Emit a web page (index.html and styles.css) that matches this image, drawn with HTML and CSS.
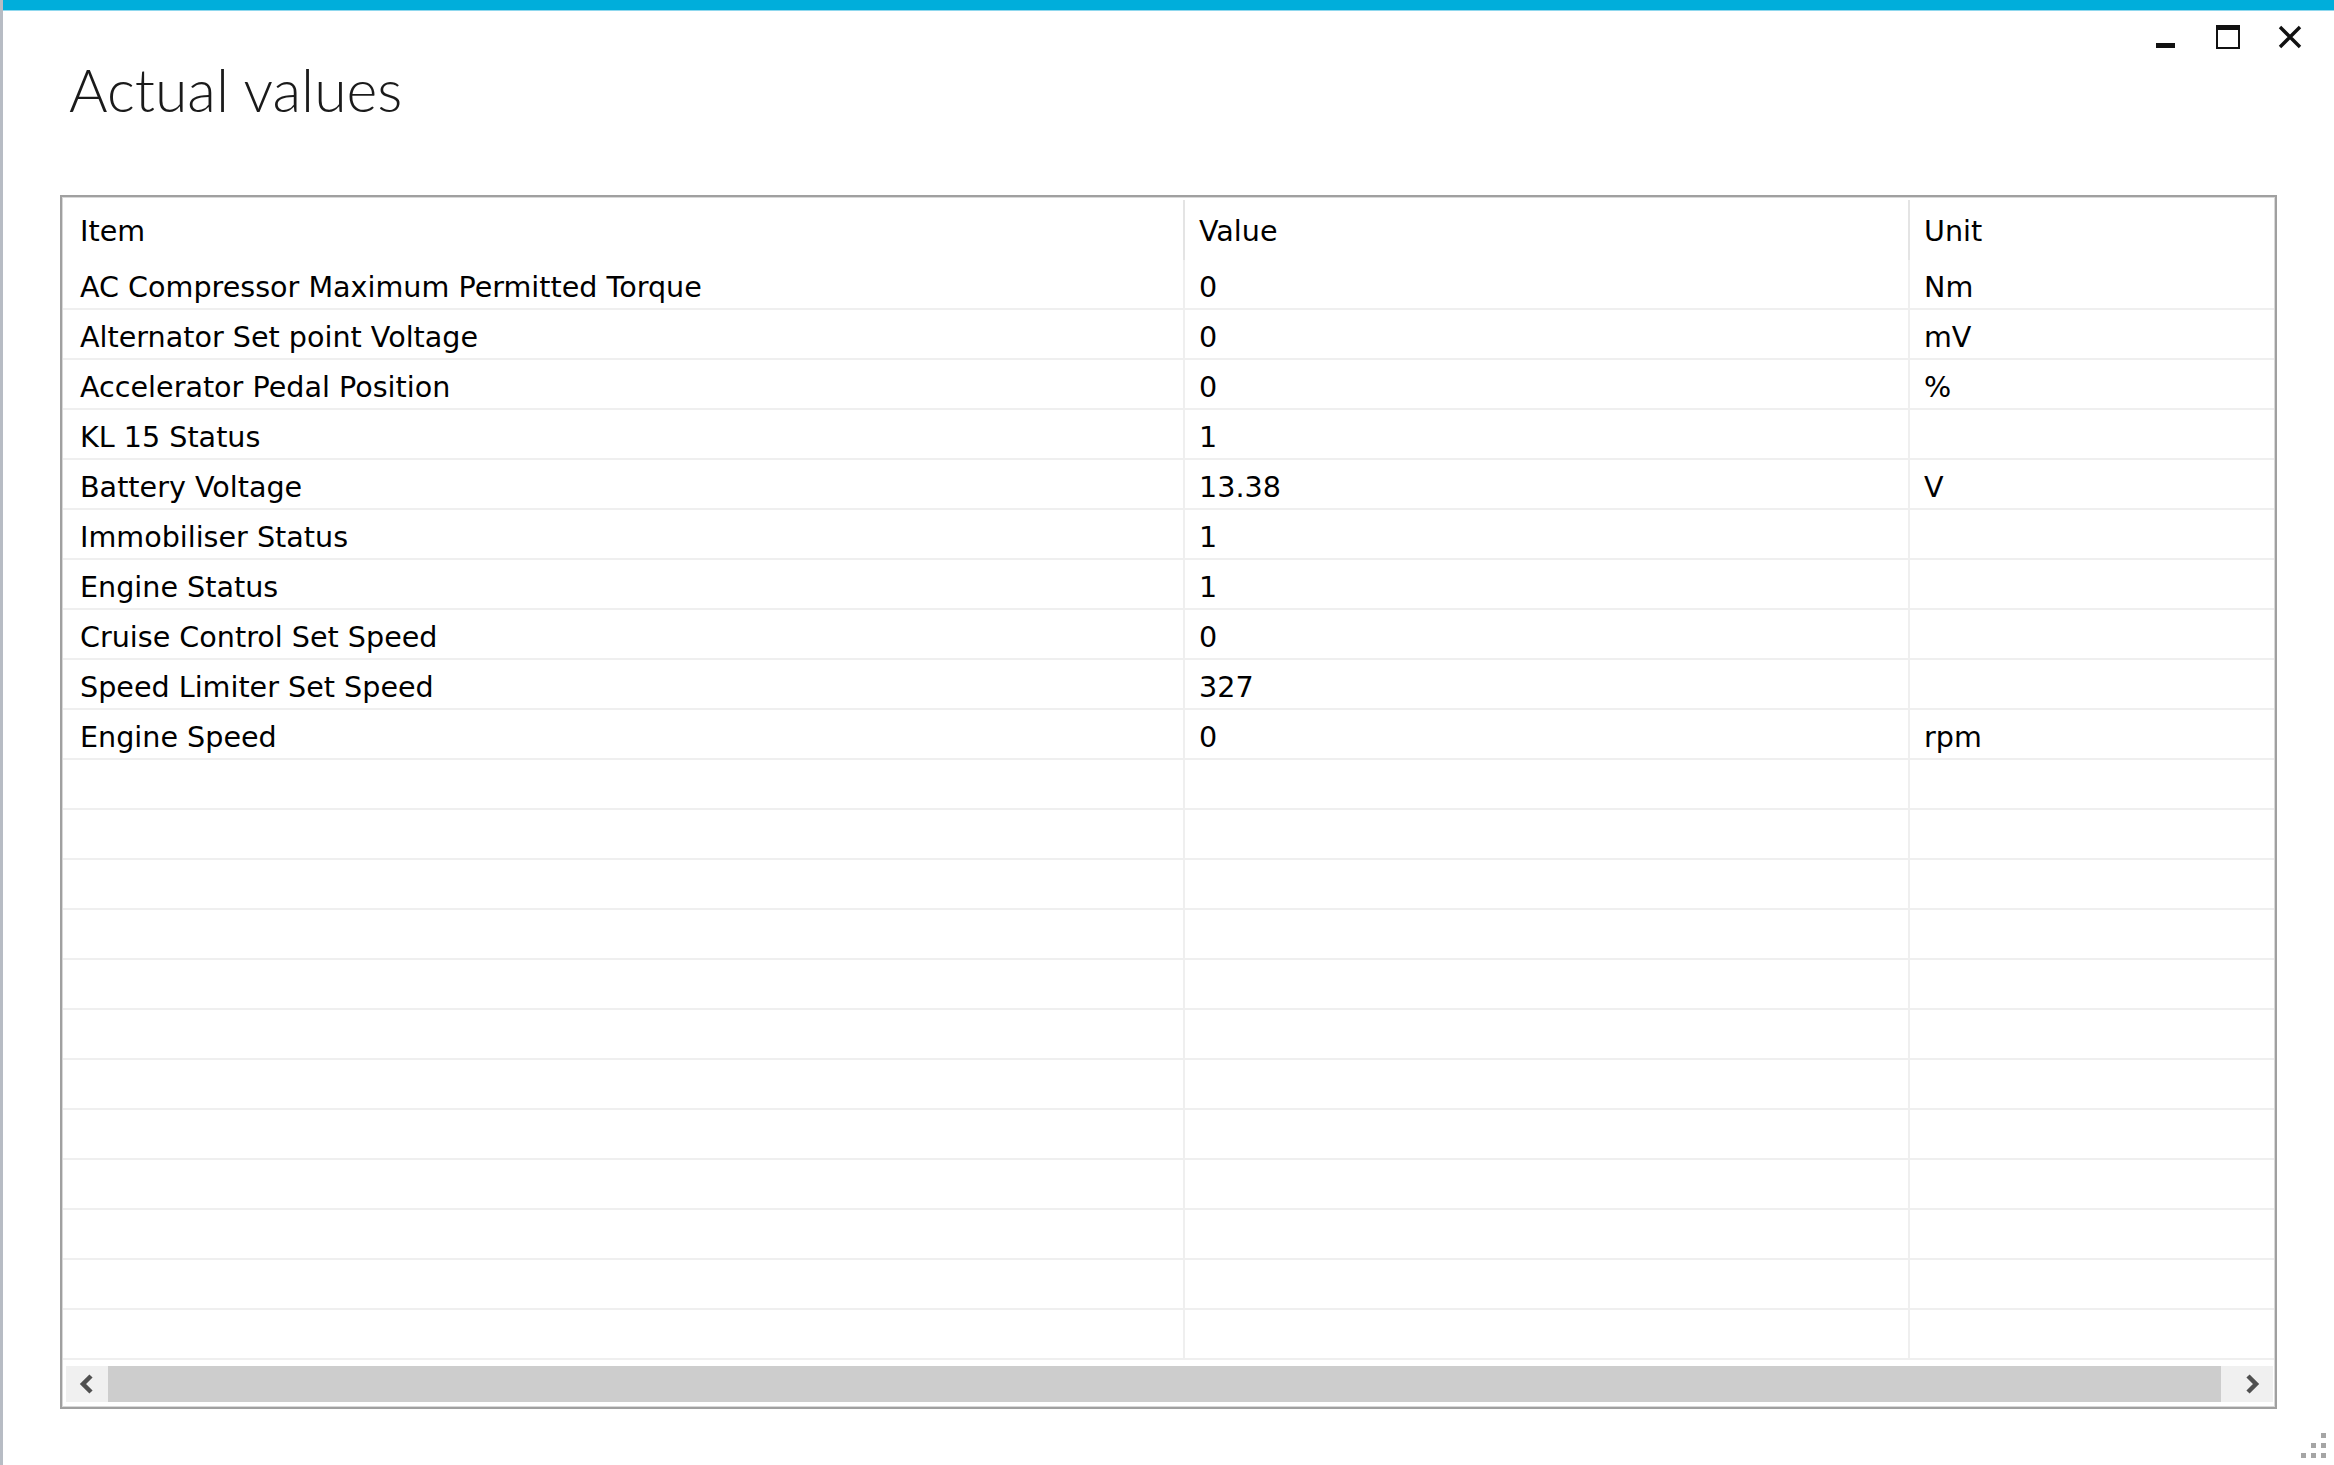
FILE: index.html
```html
<!DOCTYPE html>
<html lang="en">
<head>
    <meta charset="UTF-8">
    <meta name="viewport" content="width=device-width, initial-scale=1.0">
    <title>Actual values</title>
    <link rel="stylesheet" href="styles.css">
</head>
<body>
    <div class="window">
        <div class="accent-bar"></div>

        <div class="window-header">
            <h1 class="window-title">Actual values</h1>
            <div class="window-controls">
                <button class="control-button" title="Minimize">
                    <svg width="24" height="24" viewBox="0 0 24 24"><rect x="2" y="18" width="19" height="5" fill="#111"/></svg>
                </button>
                <button class="control-button" title="Maximize">
                    <svg width="24" height="24" viewBox="0 0 24 24"><rect x="1" y="1" width="22" height="22" fill="none" stroke="#111" stroke-width="2"/><rect x="1" y="1" width="22" height="4" fill="#111"/></svg>
                </button>
                <button class="control-button" title="Close">
                    <svg width="24" height="24" viewBox="0 0 24 24"><path d="M2 2 L22 22 M22 2 L2 22" stroke="#111" stroke-width="3.4" fill="none"/></svg>
                </button>
            </div>
        </div>

        <div class="values-grid">
            <div class="grid-head">
                <div class="cell">Item</div>
                <div class="cell">Value</div>
                <div class="cell">Unit</div>
            </div>
            <div class="grid-body" id="grid-body">
                <div class="grid-row"><div class="cell">AC Compressor Maximum Permitted Torque</div><div class="cell">0</div><div class="cell">Nm</div></div>
                <div class="grid-row"><div class="cell">Alternator Set point Voltage</div><div class="cell">0</div><div class="cell">mV</div></div>
                <div class="grid-row"><div class="cell">Accelerator Pedal Position</div><div class="cell">0</div><div class="cell">%</div></div>
                <div class="grid-row"><div class="cell">KL 15 Status</div><div class="cell">1</div><div class="cell"></div></div>
                <div class="grid-row"><div class="cell">Battery Voltage</div><div class="cell">13.38</div><div class="cell">V</div></div>
                <div class="grid-row"><div class="cell">Immobiliser Status</div><div class="cell">1</div><div class="cell"></div></div>
                <div class="grid-row"><div class="cell">Engine Status</div><div class="cell">1</div><div class="cell"></div></div>
                <div class="grid-row"><div class="cell">Cruise Control Set Speed</div><div class="cell">0</div><div class="cell"></div></div>
                <div class="grid-row"><div class="cell">Speed Limiter Set Speed</div><div class="cell">327</div><div class="cell"></div></div>
                <div class="grid-row"><div class="cell">Engine Speed</div><div class="cell">0</div><div class="cell">rpm</div></div>
            </div>
            <div class="hscroll">
                <div class="scroll-button">
                    <svg width="18" height="20" viewBox="0 0 18 20"><polyline points="13,2 5,10 13,18" fill="none" stroke="#505050" stroke-width="4.5"/></svg>
                </div>
                <div class="scroll-thumb"></div>
                <div class="scroll-button scroll-button-right">
                    <svg width="18" height="20" viewBox="0 0 18 20"><polyline points="5,2 13,10 5,18" fill="none" stroke="#505050" stroke-width="4.5"/></svg>
                </div>
            </div>
        </div>

        <svg class="resize-grip" width="26" height="26" viewBox="0 0 26 26">
            <rect x="20" y="0" width="5" height="5" fill="#a5a5a5"/>
            <rect x="10" y="10" width="5" height="5" fill="#a5a5a5"/>
            <rect x="20" y="10" width="5" height="5" fill="#a5a5a5"/>
            <rect x="0" y="20" width="5" height="5" fill="#a5a5a5"/>
            <rect x="10" y="20" width="5" height="5" fill="#a5a5a5"/>
            <rect x="20" y="20" width="5" height="5" fill="#a5a5a5"/>
        </svg>
    </div>

    <script>
        // Pad the grid with empty rows so the lines run down to the scrollbar
        const gridBody = document.getElementById('grid-body');
        const totalRows = 22;

        while (gridBody.children.length < totalRows) {
            const row = document.createElement('div');
            row.className = 'grid-row';
            row.innerHTML = '<div class="cell"></div><div class="cell"></div><div class="cell"></div>';
            gridBody.appendChild(row);
        }
    </script>
</body>
</html>
```

FILE: styles.css
```css
body {
    margin: 0;
    background-color: #fff;
    font-family: Tahoma, 'DejaVu Sans', Verdana, sans-serif;
    color: #000;
}

.window {
    position: relative;
    height: 100vh;
    box-sizing: border-box;
    border-left: 3px solid #b7bcc4;
    overflow: hidden;
}

.accent-bar {
    height: 10px;
    background-color: #00aedb;
    border-bottom: 1px solid #8fd8ee;
}

.window-header {
    display: flex;
    justify-content: space-between;
    align-items: flex-start;
    padding: 14px 32px 0 66px;
}

.window-title {
    margin: 29px 0 0 0;
    font-family: 'Segoe UI Light', Lato, 'Open Sans', sans-serif;
    font-weight: 300;
    font-size: 59px;
    line-height: 72px;
    color: #1a1a1a;
}

.window-controls {
    display: flex;
    gap: 38px;
}

.control-button {
    background: transparent;
    border: none;
    padding: 0;
    width: 24px;
    height: 24px;
    cursor: pointer;
}

.control-button svg {
    display: block;
}

.values-grid {
    margin: 69px 57px 0 57px;
    border: 2px solid #a0a0a0;
    box-shadow: inset 0 0 0 1px #d8d8d8;
    padding: 1px 1px 5px 1px;
}

.grid-head,
.grid-row {
    display: grid;
    grid-template-columns: 1120px 725px 1fr;
}

.cell {
    padding-left: 14px;
    font-size: 28.6px;
    white-space: nowrap;
    overflow: hidden;
    box-sizing: border-box;
}

.cell:first-child {
    padding-left: 17px;
}

.grid-head {
    height: 62px;
    padding-top: 2px;
    box-sizing: border-box;
}

.grid-head .cell {
    height: 60px;
    padding-top: 7px;
    line-height: 48px;
}

.grid-head .cell + .cell {
    border-left: 2px solid #e4e4e4;
}

.grid-row {
    border-bottom: 2px solid #efefef;
}

.grid-row .cell {
    height: 48px;
    padding-top: 6px;
    line-height: 42px;
}

.grid-row .cell + .cell {
    border-left: 2px solid #efefef;
}

.hscroll {
    display: flex;
    height: 36px;
    margin: 6px 1px 0 3px;
}

.scroll-button {
    width: 42px;
    background-color: #f0f0f0;
    display: flex;
    align-items: center;
    justify-content: center;
}

.scroll-button-right {
    width: 52px;
    justify-content: flex-end;
    padding-right: 12px;
    box-sizing: border-box;
}

.scroll-thumb {
    flex: 1;
    background-color: #cdcdcd;
}

.resize-grip {
    position: absolute;
    right: 7px;
    bottom: 6px;
}
```
